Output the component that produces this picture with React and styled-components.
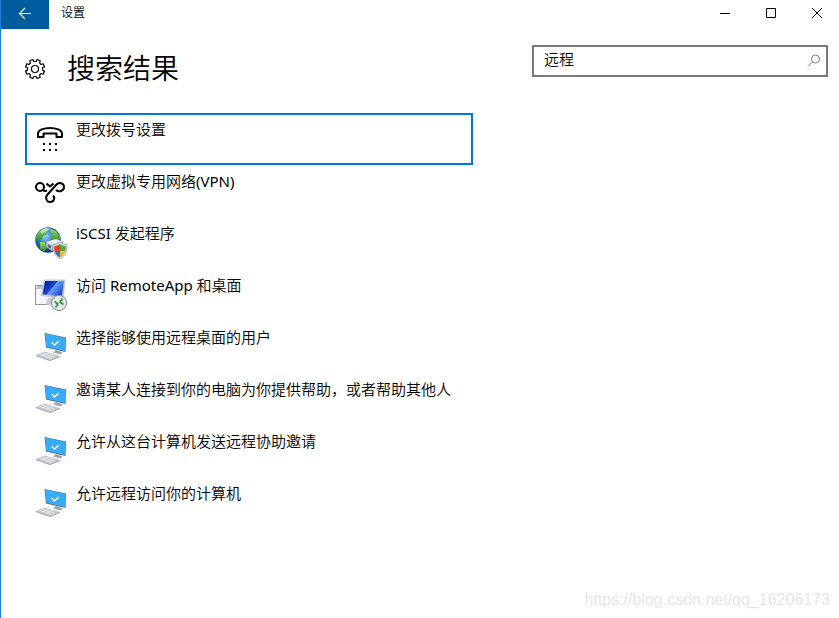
import React, { useState } from "react";
import styled, { createGlobalStyle } from "styled-components";

const GlobalStyle = createGlobalStyle`
  * {
    box-sizing: border-box;
  }

  body {
    margin: 0;
    background: #fff;
    color: #000;
    font-family: "Noto Sans", "Noto Sans CJK SC DemiLight", "Noto Sans CJK SC", sans-serif;
  }

  button,
  input {
    font-family: inherit;
    color: inherit;
  }
`;

const PhoneIcon = () => (
  <Icon viewBox="0 0 34 34">
    <path
      d="M4 14V10.500C4 7 10 5 16 5s12 2 12 5.500V14H22.500V10.500H9.500V14H4Z"
      fill="none"
      stroke="#000"
      strokeWidth="2"
      strokeLinejoin="round"
    />
    {[9, 15, 21].map((x) => (
      <g key={x}>
        <rect x={x} y="20" width="2" height="2" />
        <rect x={x} y="26" width="2" height="2" />
      </g>
    ))}
  </Icon>
);

const VpnIcon = () => (
  <Icon viewBox="0 0 34 34">
    <g fill="none" stroke="#000" strokeWidth="2">
      <circle cx="6" cy="12" r="4" />
      <path d="M9 15C10 16 11 16.300 13 15.500" />
      <path d="M12.500 8.500L16 11.500L19.500 8.500" />
      <path d="M22 15C25 17.500 30 16 30 12C30 8 25 6.500 22 10L13.500 19.500C10.500 23 13 27 16 27C20 27 21.500 23 19 20.500" />
    </g>
  </Icon>
);

const GlobeShieldIcon = () => (
  <Icon viewBox="0 0 34 34">
    <defs>
      <radialGradient id="ocean" cx="40%" cy="35%" r="65%">
        <stop offset="0" stopColor="#9bd4f7" />
        <stop offset="0.5" stopColor="#2674c8" />
        <stop offset="1" stopColor="#0d3480" />
      </radialGradient>
      <linearGradient id="land" x1="0" y1="0" x2="0" y2="1">
        <stop offset="0" stopColor="#9bd665" />
        <stop offset="1" stopColor="#22852b" />
      </linearGradient>
    </defs>
    <circle cx="14" cy="13" r="12.800" fill="url(#ocean)" />
    <path d="M3 7C6 3 9 1 13 1L15 3L12 5L13 7L9 9L8 12L5 12L3 15L1.500 12Z" fill="url(#land)" />
    <path d="M17 2L22 4L26 9L26 14L23 16L20 13L17 12L16 9L19 7L16 5Z" fill="url(#land)" />
    <path d="M6 15L10 15L13 18L12 22L10 25L6 22Z" fill="url(#land)" />
    <path d="M6 4Q11 0 18 2Q12 3 8 7Z" fill="#fff" opacity="0.5" />
    <path d="M12 15L22 12L29 15L28 21L18 24L12 20Z" fill="#b5bec7" stroke="#6d7d8c" strokeWidth="0.600" />
    <path d="M12 15L22 12L29 15L18 18Z" fill="#e8eef2" />
    <path d="M14 17.500L17 19V21.500L14 20Z" fill="#4f6679" />
    <path d="M26 15Q29 18 33 17.500Q34 27 26 32Q18 27 19 17.500Q23 18 26 15Z" fill="#e2e5e8" stroke="#8a939b" strokeWidth="0.700" />
    <path d="M26 17V24H20.500Q20 21 20.300 19Q24 19 26 17Z" fill="#d84424" />
    <path d="M26 17Q28 19 31.700 19Q32 22 31.400 24H26Z" fill="#5ba83a" />
    <path d="M26 24V30.500Q21.500 28 20.500 24Z" fill="#2e75c9" />
    <path d="M26 24H31.400Q30 28.500 26 30.500Z" fill="#f4be28" />
  </Icon>
);

const RemoteAppIcon = () => (
  <Icon viewBox="0 0 34 34">
    <defs>
      <linearGradient id="screen" x1="0" y1="0" x2="1" y2="0.6">
        <stop offset="0" stopColor="#061585" />
        <stop offset="0.5" stopColor="#1744d5" />
        <stop offset="0.55" stopColor="#6da0f5" />
        <stop offset="1" stopColor="#1b4bd2" />
      </linearGradient>
    </defs>
    <rect x="1.500" y="6.500" width="17" height="19" fill="#f5f7fa" stroke="#8d949e" />
    <path d="M2 9.500H18" stroke="#b3bcc8" />
    <path d="M3 8H9" stroke="#6e88b2" />
    <path d="M14 19L23 19L24 23L28 26L13 26L12 24Z" fill="#c6cbd2" />
    <path d="M10 1L31 1L29 19L7 16.500Z" fill="#dfe3e9" stroke="#a3abb6" strokeWidth="0.600" />
    <path d="M11 2L30 2L28 17.500L8.500 15.500Z" fill="url(#screen)" />
    <circle cx="25" cy="24" r="7.600" fill="#e7e9e9" stroke="#868d91" />
    <g fill="none" stroke="#269831" strokeWidth="1.600">
      <path d="M20.500 22.500L24 25L21.500 28.500" />
      <path d="M29.500 25.500L26 23L28.500 19.500" />
    </g>
  </Icon>
);

const ComputerIcon = () => (
  <Icon viewBox="0 1 34 34">
    <path d="M22 20L28 22L27 24.500L19 22.500Z" fill="#9ba4ab" />
    <path d="M10.500 3L32 7.500L31.500 22L12 17.500Z" fill="#536e80" />
    <path d="M11 3.500L31.500 8L31 21L12.500 16.800Z" fill="#38adf7" />
    <path d="M17.500 12L20.500 15L25 11" fill="none" stroke="#fff" strokeWidth="1.400" />
    <path d="M2 25L11 21.500L26 26L16 30Z" fill="#c3c9cd" />
    <path d="M2 25L16 30L26 26V27L16 31L2 26Z" fill="#929ca3" />
    <path d="M6 24.500L18 28.500M9 23.300L21 27.300M8 26L15 23M12 27.500L19 24.500" stroke="#eef1f3" strokeWidth="0.700" />
  </Icon>
);

const GearIcon = () => {
  // eight teeth, two outer and two inner points each
  const points = [];
  for (let i = 0; i < 8; i++) {
    [
      [-14, 7.6],
      [-10, 9.7],
      [10, 9.7],
      [14, 7.6],
    ].forEach(([offset, r]) => {
      const a = ((i * 45 + 22.5 + offset) * Math.PI) / 180;
      points.push(`${10 + r * Math.cos(a)},${10 + r * Math.sin(a)}`);
    });
  }
  return (
    <Gear viewBox="0 0 20 20">
      <polygon points={points.join(" ")} />
      <circle cx="10" cy="10" r="3.500" />
    </Gear>
  );
};

const results = [
  { label: "更改拨号设置", icon: PhoneIcon },
  { label: "更改虚拟专用网络(VPN)", icon: VpnIcon },
  { label: "iSCSI 发起程序", icon: GlobeShieldIcon },
  { label: "访问 RemoteApp 和桌面", icon: RemoteAppIcon },
  { label: "选择能够使用远程桌面的用户", icon: ComputerIcon },
  { label: "邀请某人连接到你的电脑为你提供帮助，或者帮助其他人", icon: ComputerIcon },
  { label: "允许从这台计算机发送远程协助邀请", icon: ComputerIcon },
  { label: "允许远程访问你的计算机", icon: ComputerIcon },
];

const App = () => {
  const [query, setQuery] = useState("远程");
  const [selected, setSelected] = useState(0);

  return (
    <Window>
      <GlobalStyle />
      <TitleBar>
        <BackButton aria-label="返回">
          <svg width="14" height="14" viewBox="0 0 14 14" fill="none" stroke="#fff" strokeWidth="1.200">
            <path d="M13 7.500H1.500M7 2L1.500 7.500L7 13" />
          </svg>
        </BackButton>
        <WindowTitle>设置</WindowTitle>
        <WindowButton aria-label="最小化">
          <svg width="10" height="10" stroke="#000">
            <path d="M0 5.500H10" />
          </svg>
        </WindowButton>
        <WindowButton aria-label="最大化">
          <svg width="10" height="10" stroke="#000" fill="none">
            <path d="M.5 .5H9.500V9.500H.5Z" />
          </svg>
        </WindowButton>
        <WindowButton aria-label="关闭">
          <svg width="10" height="10" stroke="#000">
            <path d="M0 0L10 10M10 0L0 10" />
          </svg>
        </WindowButton>
      </TitleBar>

      <Header>
        <Heading>
          <GearIcon />
          <h1>搜索结果</h1>
        </Heading>
        <SearchBox>
          <input
            type="text"
            aria-label="查找设置"
            value={query}
            onChange={(e) => setQuery(e.target.value)}
          />
          <svg width="14" height="14" viewBox="0 0 14 14" fill="none" stroke="#7a7a7a">
            <circle cx="8.500" cy="5" r="4" />
            <path d="M5.500 8L1 12.500" />
          </svg>
        </SearchBox>
      </Header>

      <ResultList>
        {results.map(({ label, icon: ResultIcon }, i) => (
          <li key={label}>
            <Result $active={i === selected} onClick={() => setSelected(i)}>
              <ResultIcon />
              <span>{label}</span>
            </Result>
          </li>
        ))}
      </ResultList>

      <Watermark>https://blog.csdn.net/qq_16206173</Watermark>
    </Window>
  );
};

const Window = styled.main`
  position: relative;
  min-height: 100vh;
  border-left: 1px solid #1883d7;
`;

const TitleBar = styled.header`
  display: flex;
  height: 29px;
`;

const BackButton = styled.button`
  display: flex;
  align-items: center;
  justify-content: center;
  width: 48px;
  padding: 0 0 4px;
  border: 0;
  background: #005a9e;
`;

const WindowTitle = styled.span`
  flex: 1;
  padding-left: 12px;
  font-size: 12px;
  font-weight: 350;
  line-height: 26px;
`;

const WindowButton = styled.button`
  display: flex;
  align-items: center;
  justify-content: center;
  width: 46px;
  height: 26px;
  padding: 0;
  border: 0;
  background: transparent;

  &:last-child {
    width: 45px;
  }
`;

const Header = styled.div`
  display: flex;
  justify-content: space-between;
  align-items: flex-start;
  gap: 24px;
  padding: 16px 11px 0 24px;
`;

const Heading = styled.div`
  display: flex;
  align-items: center;
  gap: 22px;
  height: 48px;

  h1 {
    margin: 0;
    padding-bottom: 2px;
    font-size: 28px;
    font-weight: 350;
    line-height: 46px;
  }
`;

const Gear = styled.svg`
  width: 20px;
  height: 20px;
  fill: none;
  stroke: #000;
  stroke-width: 1.2;
  stroke-linejoin: round;
`;

const SearchBox = styled.label`
  display: flex;
  align-items: center;
  width: 296px;
  height: 32px;
  padding: 0 5px 0 10px;
  border: 2px solid #7a7a7a;

  input {
    flex: 1;
    min-width: 0;
    height: 28px;
    padding: 0 0 5px;
    border: 0;
    outline: 0;
    background: transparent;
    font-size: 15px;
    font-weight: 350;
  }
`;

const ResultList = styled.ul`
  max-width: 472px;
  margin: 20px 0 0;
  padding: 0 0 0 24px;
  list-style: none;
`;

const Result = styled.button`
  display: flex;
  align-items: flex-start;
  gap: 8px;
  width: 100%;
  height: 52px;
  padding: 4px 7px;
  border: 2px solid ${({ $active }) => ($active ? "#0078d7" : "transparent")};
  background: transparent;
  text-align: left;
  font-size: 15px;
  line-height: 20px;
  white-space: nowrap;
`;

const Icon = styled.svg`
  flex: none;
  width: 34px;
  height: 34px;
  margin-top: 4px;
`;

const Watermark = styled.span`
  position: absolute;
  right: 9px;
  bottom: 8px;
  color: #e6e6e6;
  font-family: "Liberation Sans", sans-serif;
  font-size: 16px;
  line-height: 20px;
`;

export default App;
